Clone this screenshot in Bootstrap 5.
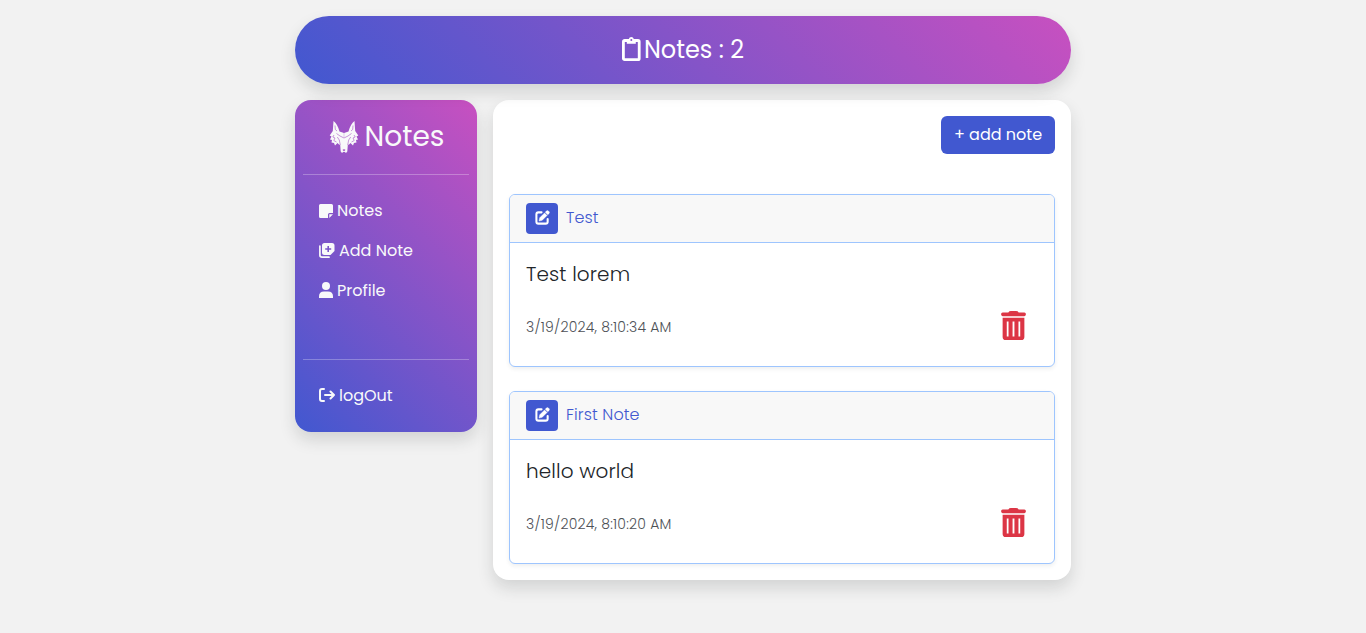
<!DOCTYPE html>
<html lang="en">
<head>
<meta charset="utf-8">
<meta name="viewport" content="width=device-width, initial-scale=1">
<title>Notes</title>
<link href="https://cdn.jsdelivr.net/npm/bootstrap@5.3.0/dist/css/bootstrap.min.css" rel="stylesheet">
<style>
  body { background: #f2f2f2; font-family: Poppins, Inter, sans-serif; }
  .app { width: 776px; }
  .gradient { background: linear-gradient(45deg, #4158d0, #c850c0); }
  .topbar { height: 68px; font-size: 24px; z-index: 2; }
  .side { width: 182px; height: 332px; border-radius: 16px; z-index: 1; }
  .brand { height: 74px; font-size: 28px; padding-left: 1px; gap: 6px; }
  .rule { height: 1px; background: #fff; opacity: .28; }
  .side .nav-link { height: 40px; padding: 0 16px; color: #f8f9fa; }
  .nav-icon { margin: 2px 4px 4px 0; }
  .panel { width: 578px; height: 480px; border-radius: 16px; }
  .btn-brand, .btn-brand:hover { background: #4158d0; color: #fff; }
  .btn-add { width: 114px; height: 38px; padding: 0; }
  .btn-edit { width: 32px; height: 31px; }
  .btn-edit svg { margin: 2px 0 4px; }
  .note { height: 173px; border-color: #9ec5fe; }
  .note .card-header { height: 48px; background: #f8f8f8; border-color: #9ec5fe; color: #4158d0; font-weight: 300; }
  .note-title { padding-bottom: 2px; letter-spacing: .12px; }
  .note-text { font-size: 20px; line-height: 30px; font-weight: 300; letter-spacing: .1px; }
  .note-date { font-size: 14px; font-weight: 300; color: #4d5156; letter-spacing: .22px; padding-top: 1px; }
  .note-trash { margin: -2px 4px 1px 0; }
</style>
</head>
<body>
<svg class="d-none">
  <symbol id="edit" viewBox="0 0 16 16"><path d="M7 2.500H3.600Q1.500 2.500 1.500 4.600V12.400Q1.500 14.500 3.600 14.500H11.400Q13.500 14.500 13.500 12.400V9.500" fill="none" stroke="currentColor" stroke-width="2.200" stroke-linecap="round"/><path d="M5 8.300 10.200 3.100 12.900 5.800 7.700 11 4.300 11.800ZM10.900 2.400 12.100 1.100Q13.300.1 14.500 1.200L15 1.700Q16 2.800 14.900 3.900L13.600 5.100Z" fill="currentColor" stroke="currentColor" stroke-width=".4"/></symbol>
  <symbol id="trash" viewBox="0 0 24 28"><path fill="currentColor" fill-rule="evenodd" d="M1.500 1.400H7Q7.800 0 9.500 0H14.500Q16.200 0 17 1.400H22.500Q24 1.600 24 3.200T22.500 5H1.500Q0 4.800 0 3.200T1.500 1.400ZM1.500 6.600H22.500V25Q22.500 28 19.500 28H4.500Q1.500 28 1.500 25ZM5.500 10.200V24.500H7.200V10.200ZM11.100 10.200V24.500H12.900V10.200ZM16.800 10.200V24.500H18.500V10.200Z"/></symbol>
</svg>
<div class="app mx-auto pt-3 min-vh-100">
  <header class="topbar gradient rounded-pill shadow text-white d-flex align-items-center justify-content-center position-relative">
    <svg width="22" height="26" viewBox="0 0 22 26" fill="none" stroke="currentColor"><rect x="1.400" y="3.500" width="15.800" height="19.200" rx="1.200" stroke-width="2.800"/><path d="M4.800 2H6.800Q7.300 0 9.300 0T11.800 2H13.800V6.800H4.800Z" fill="currentColor" stroke="none"/><circle cx="9.300" cy="3" r="1" fill="#8a54c9" stroke="none"/></svg>
    <span>Notes : 2</span>
  </header>
  <div class="d-flex gap-3 mt-3 align-items-start">
    <aside class="side gradient shadow px-2 text-light position-relative">
      <div class="brand d-flex align-items-center justify-content-center">
        <svg width="30" height="34" viewBox="0 0 30 34"><path fill="#f8f9fa" d="M4.500 1Q8.500 4 10.500 11.500L15 13 19.500 11.500Q21.500 4 25.500 1L26.200 11 29.300 15.500 27.500 16.500 29 19.500 27 20 27.500 22.500 25 23 24 25.500 21.500 23 20 24.500 18.800 25 18.300 31.500 17 33 15.800 32H14.200L13 33 11.700 31.500 11.200 25 10 24.500 8.500 23 6 25.500 5 23 2.500 22.500 3 20 1 19.500 2.500 16.500 .7 15.500 3.800 11Z"/><g fill="none" stroke="#a653c5" stroke-width=".6"><path d="M6 5.500 6.300 9.500 8 11M24 5.500 23.700 9.500 22 11M7.500 13.500 11 16 15 18 19 16 22.500 13.500M8.300 17 10.300 20 11.300 25M21.700 17 19.700 20 18.700 25M5 15 3.800 17 6 18 4.800 20.500 7.500 22M25 15 26.200 17 24 18 25.200 20.500 22.500 22"/><path stroke-width=".3" d="M15 12V17"/><path d="M14 29.700H16L15.500 30.800H14.500Z" fill="#a653c5"/></g></svg>
        <span>Notes</span>
      </div>
      <div class="rule"></div>
      <nav class="nav flex-column pt-3">
        <a class="nav-link d-flex align-items-center" href="#"><svg class="me-1" width="14" height="14" viewBox="0 0 14 14"><path fill="currentColor" d="M1.500 0H12.500Q14 0 14 1.500V9H10.500Q9 9 9 10.500V14H1.500Q0 14 0 12.500V1.500Q0 0 1.500 0ZM10.300 10.200H14L10.300 14Z"/></svg>Notes</a>
        <a class="nav-link d-flex align-items-center" href="#"><svg class="me-1" width="16" height="16" viewBox="0 0 16 16"><path d="M.9 3V12.300Q.9 14.200 3 14.200H10" fill="none" stroke="currentColor" stroke-width="1.700" stroke-linecap="round"/><path fill="currentColor" fill-rule="evenodd" d="M5.500 0H13Q15.500 0 15.500 2.500V8L11.500 12H5.500Q3 12 3 9.500V2.500Q3 0 5.500 0ZM8.400 3V5.200H6.200V6.800H8.400V9H10V6.800H12.200V5.200H10V3Z"/></svg>Add Note</a>
        <a class="nav-link d-flex align-items-center" href="#"><svg class="nav-icon" width="14" height="16" viewBox="0 0 14 16" fill="currentColor"><circle cx="7" cy="4" r="4"/><path d="M0 16V14.500Q0 9.500 5 9.500H9Q14 9.500 14 14.500V16Z"/></svg>Profile</a>
      </nav>
      <div class="rule mt-5"></div>
      <nav class="nav flex-column pt-3">
        <a class="nav-link d-flex align-items-center" href="#"><svg class="nav-icon" width="16" height="14" viewBox="0 0 16 14" fill="none" stroke="currentColor" stroke-width="2" stroke-linecap="round" stroke-linejoin="round"><path d="M5 1H3Q1 1 1 3V11Q1 13 3 13H5M6 7H15M11.500 3.500 15 7 11.500 10.500"/></svg>logOut</a>
      </nav>
    </aside>
    <main class="panel bg-white shadow p-3">
      <div class="d-flex justify-content-end mb-3 pb-4"><button class="btn btn-brand btn-add">+ add note</button></div>
      <article class="card note shadow-sm mb-4">
        <div class="card-header d-flex align-items-center gap-2 py-0"><button class="btn btn-brand btn-sm btn-edit p-0 d-flex align-items-center justify-content-center"><svg width="15" height="15"><use href="#edit"/></svg></button><span class="note-title">Test</span></div>
        <div class="card-body"><div class="note-text">Test lorem</div>
          <div class="d-flex justify-content-between align-items-center pt-4 pe-2"><span class="note-date">3/19/2024, 8:10:34 AM</span><svg class="text-danger note-trash" width="25" height="29"><use href="#trash"/></svg></div></div>
      </article>
      <article class="card note shadow-sm">
        <div class="card-header d-flex align-items-center gap-2 py-0"><button class="btn btn-brand btn-sm btn-edit p-0 d-flex align-items-center justify-content-center"><svg width="15" height="15"><use href="#edit"/></svg></button><span class="note-title">First Note</span></div>
        <div class="card-body"><div class="note-text">hello world</div>
          <div class="d-flex justify-content-between align-items-center pt-4 pe-2"><span class="note-date">3/19/2024, 8:10:20 AM</span><svg class="text-danger note-trash" width="25" height="29"><use href="#trash"/></svg></div></div>
      </article>
    </main>
  </div>
</div>
<script src="https://cdn.jsdelivr.net/npm/bootstrap@5.3.0/dist/js/bootstrap.bundle.min.js"></script>
</body>
</html>
